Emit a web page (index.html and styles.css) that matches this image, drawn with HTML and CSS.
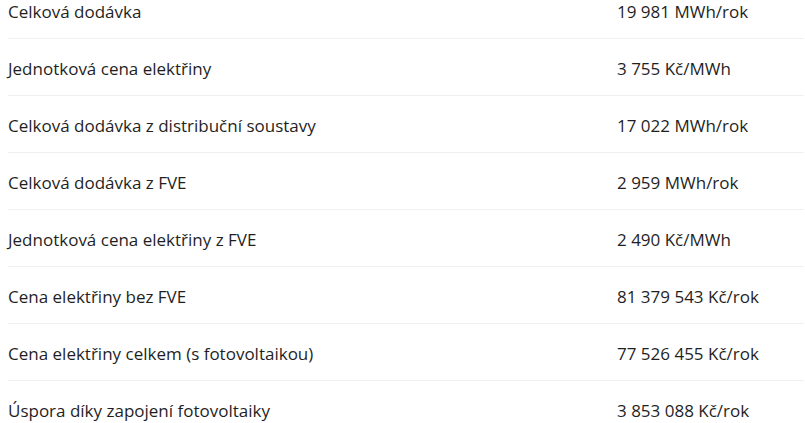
FILE: index.html
```html
<!DOCTYPE html>
<html lang="cs">
<head>
  <meta charset="UTF-8">
  <meta name="viewport" content="width=device-width, initial-scale=1.0">
  <title>Parametry dodávky</title>
  <link rel="stylesheet" href="styles.css">
</head>
<body>

  <table class="parametry">
    <tbody>
      <tr>
        <td>Celková dodávka</td>
        <td>19 981 MWh/rok</td>
      </tr>
      <tr>
        <td>Jednotková cena elektřiny</td>
        <td>3 755 Kč/MWh</td>
      </tr>
      <tr>
        <td>Celková dodávka z distribuční soustavy</td>
        <td>17 022 MWh/rok</td>
      </tr>
      <tr>
        <td>Celková dodávka z FVE</td>
        <td>2 959 MWh/rok</td>
      </tr>
      <tr>
        <td>Jednotková cena elektřiny z FVE</td>
        <td>2 490 Kč/MWh</td>
      </tr>
      <tr>
        <td>Cena elektřiny bez FVE</td>
        <td>81 379 543 Kč/rok</td>
      </tr>
      <tr>
        <td>Cena elektřiny celkem (s fotovoltaikou)</td>
        <td>77 526 455 Kč/rok</td>
      </tr>
      <tr>
        <td>Úspora díky zapojení fotovoltaiky</td>
        <td>3 853 088 Kč/rok</td>
      </tr>
    </tbody>
  </table>

</body>
</html>
```

FILE: styles.css
```css
body {
  font-family: 'Open Sans', sans-serif;
  margin: 0;
  padding: 0 0 0 8px;
  background-color: #ffffff;
  color: #1f1f1f;
  overflow: hidden;
}

.parametry {
  width: 796px;
  margin-top: -18px;
  border-collapse: collapse;
  font-size: 17px;
}

.parametry td {
  height: 52px;
  padding: 4px 0 0 0;
  line-height: 1.3;
  text-align: left;
  vertical-align: middle;
  border-bottom: 1px solid #f0f0f0;
}

.parametry td:first-child {
  width: 609px;
}

.parametry tr:last-child td {
  border-bottom: none;
}
```
